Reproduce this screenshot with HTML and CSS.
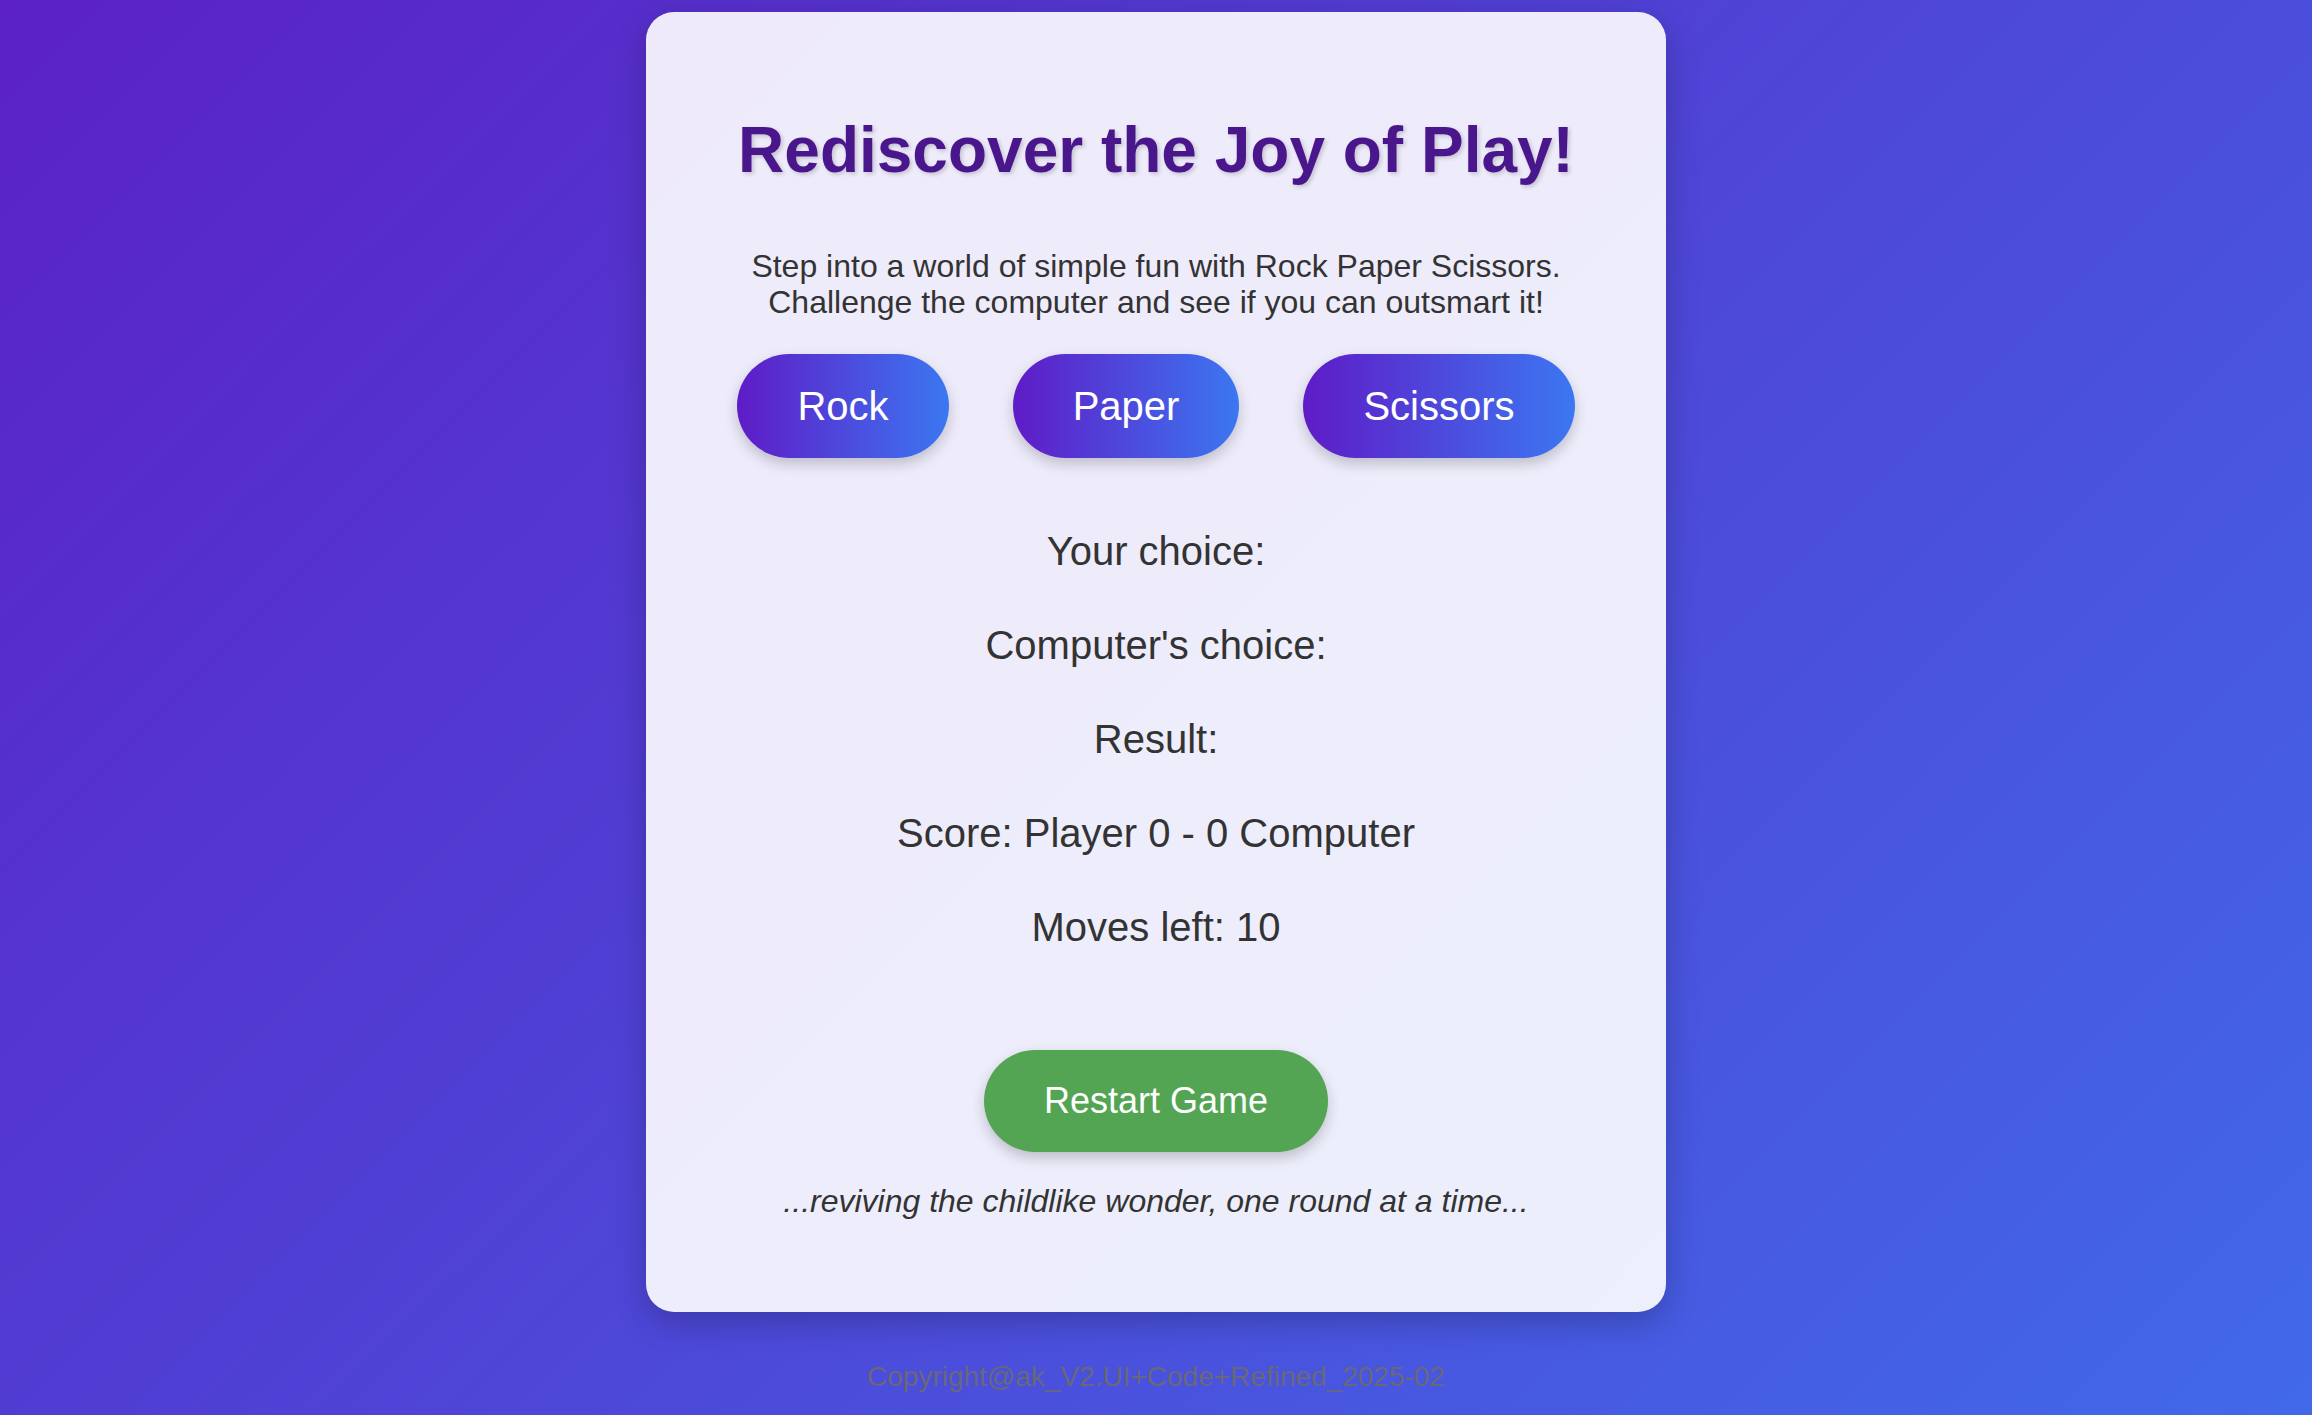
FILE: index.html
```html
<!DOCTYPE html>
<html lang="en">
<head>
<meta charset="utf-8">
<title>Rock Paper Scissors</title>
<link rel="stylesheet" href="styles.css">
</head>
<body>
  <main class="card">
    <h1 class="title">Rediscover the Joy of Play!</h1>
    <p class="intro">Step into a world of simple fun with Rock Paper Scissors.<br>Challenge the computer and see if you can outsmart it!</p>
    <div class="choices">
      <button class="choice">Rock</button>
      <button class="choice">Paper</button>
      <button class="choice">Scissors</button>
    </div>
    <div class="results">
      <p class="line">Your choice:</p>
      <p class="line">Computer's choice:</p>
      <p class="line">Result:</p>
      <p class="line">Score: Player 0 - 0 Computer</p>
      <p class="line">Moves left: 10</p>
    </div>
    <button class="restart">Restart Game</button>
    <p class="tagline">...reviving the childlike wonder, one round at a time...</p>
  </main>
  <footer class="footer">Copyright@ak_V2.UI+Code+Refined_2025-02</footer>
</body>
</html>
```

FILE: styles.css
```css
html, body {
  margin: 0;
  padding: 0;
}

body {
  min-height: 100vh;
  box-sizing: border-box;
  padding-top: 12px;
  background: linear-gradient(135deg, #5b21c5 0%, #4e45d7 50%, #4169e9 100%);
  font-family: "Liberation Sans", Arial, sans-serif;
  display: flex;
  flex-direction: column;
  align-items: center;
}

.card {
  width: 1020px;
  box-sizing: border-box;
  padding: 102px 60px 93px;
  background: rgba(255, 255, 255, 0.9);
  border-radius: 28px;
  box-shadow: 0 10px 32px rgba(0, 0, 0, 0.22);
  display: flex;
  flex-direction: column;
  align-items: center;
  text-align: center;
  color: #333;
}

.title {
  margin: 0;
  font-size: 64px;
  line-height: 1.15;
  font-weight: bold;
  color: #4a168c;
  text-shadow: 2px 2px 4px rgba(0, 0, 0, 0.18);
}

.intro {
  margin: 60px 0 0;
  font-size: 32px;
  line-height: 1.15;
  color: #333;
}

.choices {
  margin-top: 33px;
  display: flex;
  gap: 64px;
  justify-content: center;
}

.choice {
  font-family: "Liberation Sans", Arial, sans-serif;
  font-size: 40px;
  line-height: 1.15;
  color: #fff;
  border: none;
  padding: 29px 60px;
  border-radius: 60px;
  background: linear-gradient(90deg, #5f1bc7 0%, #3b77f1 100%);
  box-shadow: 0 6px 14px rgba(0, 0, 0, 0.2);
  cursor: pointer;
}

.results {
  margin-top: 70px;
  display: flex;
  flex-direction: column;
  gap: 48px;
}

.line {
  margin: 0;
  font-size: 40px;
  line-height: 1.15;
  color: #333;
}

.restart {
  margin-top: 100px;
  font-family: "Liberation Sans", Arial, sans-serif;
  font-size: 36px;
  line-height: 1.15;
  color: #fff;
  border: none;
  padding: 30px 60px;
  border-radius: 60px;
  background: #53a553;
  box-shadow: 0 6px 14px rgba(0, 0, 0, 0.2);
  cursor: pointer;
}

.tagline {
  margin: 31px 0 0;
  font-size: 32px;
  line-height: 1.15;
  font-style: italic;
  color: #333;
}

.footer {
  margin-top: 49px;
  font-size: 28px;
  line-height: 1.15;
  color: #68687a;
}
```
